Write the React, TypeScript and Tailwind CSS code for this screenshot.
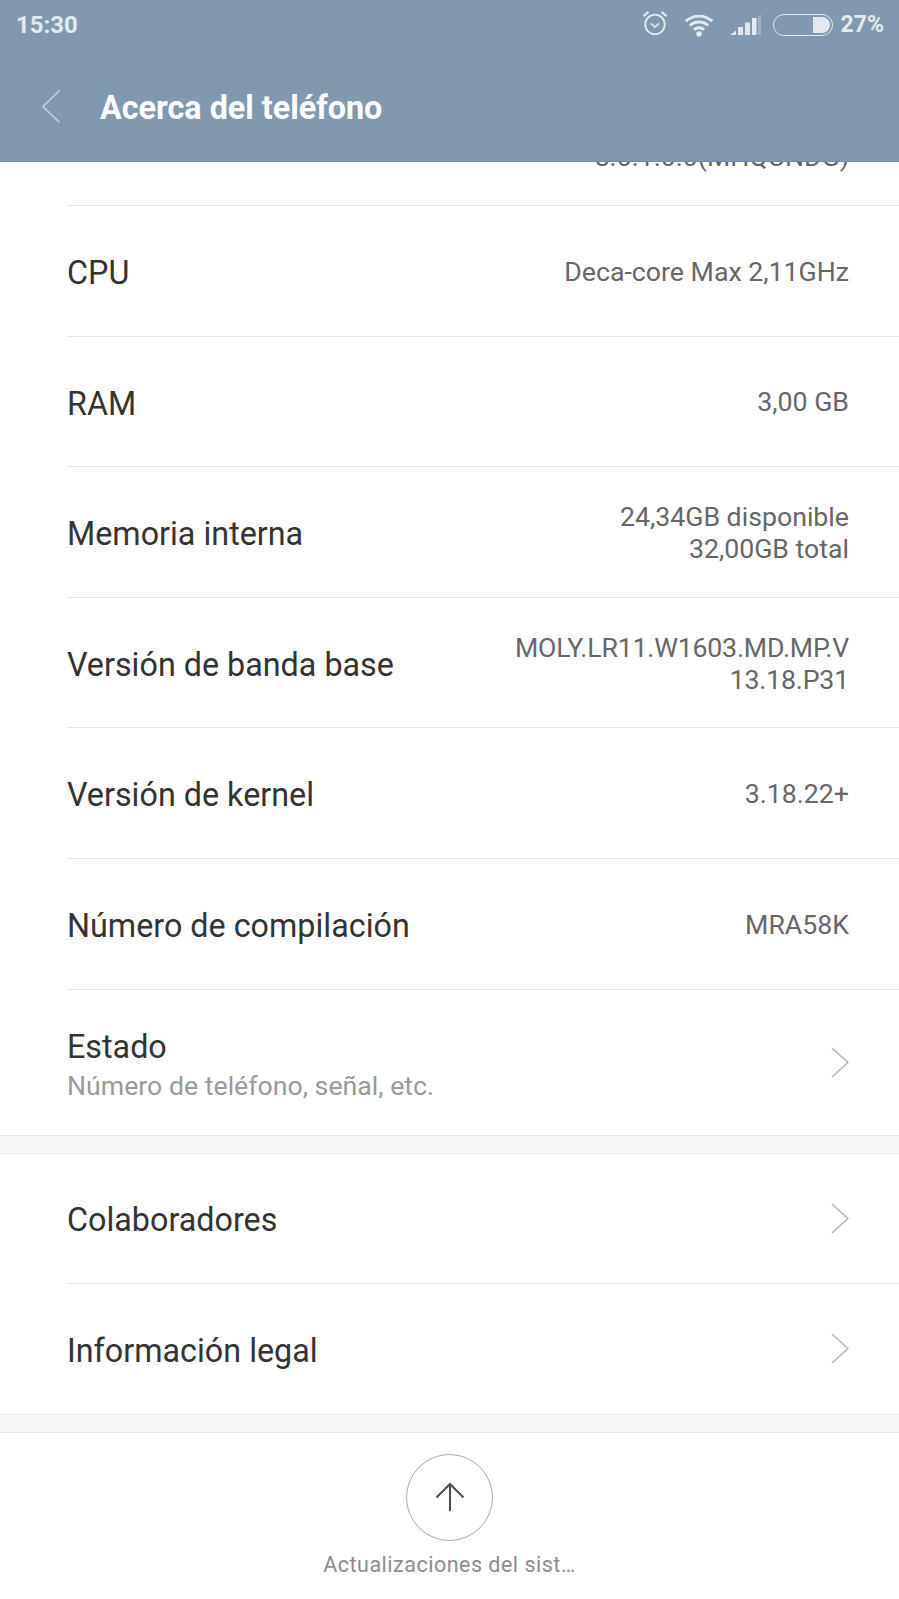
const rows = [
  { label: "CPU", value: ["Deca-core Max 2,11GHz"] },
  { label: "RAM", value: ["3,00 GB"] },
  { label: "Memoria interna", value: ["24,34GB disponible", "32,00GB total"] },
  { label: "Versión de banda base", value: ["MOLY.LR11.W1603.MD.MP.V", "13.18.P31"], tight: true },
  { label: "Versión de kernel", value: ["3.18.22+"] },
  { label: "Número de compilación", value: ["MRA58K"] },
];

function Chevron() {
  return (
    <svg width="18" height="31" viewBox="0 0 18 31" fill="none" className="shrink-0">
      <path d="M1 1 L17 15.5 L1 30" stroke="#b4b4b4" strokeWidth="1.5" />
    </svg>
  );
}

function StatusIcons() {
  return (
    <div className="flex items-center">
      {/* alarm */}
      <svg width="26" height="26" viewBox="0 0 28 28" fill="none" stroke="#e3e9ef" strokeWidth="2" className="mb-[5px] mr-[15px]">
        <circle cx="14" cy="15.5" r="10.5" />
        <path d="M9.5 14.5 L14 18.5 L18.5 14.5" strokeWidth="1.8" />
        <path d="M1.5 6.5 L7 2 M26.5 6.5 L21 2" strokeWidth="2.4" />
      </svg>
      {/* wifi */}
      <svg width="32" height="24" viewBox="0 0 32 26" fill="none" stroke="#e3e9ef" strokeWidth="3" className="mr-[15px]">
        <path d="M1.5 9 C9.5 1.5 22.5 1.5 30.5 9" />
        <path d="M6 13.5 C11.5 8.5 20.5 8.5 26 13.5" />
        <path d="M10.5 18 C13.5 15.3 18.5 15.3 21.5 18" />
        <circle cx="16" cy="22.8" r="3" fill="#e3e9ef" stroke="none" />
      </svg>
      {/* signal */}
      <svg width="31" height="22" viewBox="0 0 31 22" className="mr-[12px]">
        <path d="M0 21 L6 16.5 V21 Z" fill="#e3e9ef" />
        <rect x="8" y="13" width="5" height="8" fill="#e3e9ef" />
        <rect x="15" y="8.5" width="5" height="12.5" fill="#e3e9ef" />
        <rect x="22" y="4" width="4.5" height="17" fill="#e3e9ef" />
        <path d="M28 2 L31 0 V21 H28 Z" fill="#9fb0c0" />
      </svg>
      {/* battery */}
      <div className="mr-[8px] flex h-[22px] w-[60px] items-center justify-end rounded-full border-[1.5px] border-[#e3e9ef] pr-[2px]">
        <div className="h-[16px] w-[17px] rounded-r-full bg-[#e3e9ef]" />
      </div>
    </div>
  );
}

export default function App() {
  return (
    <div className="flex h-[1599px] w-[899px] flex-col overflow-hidden bg-white font-['Roboto',sans-serif]">
      <header className="h-[162px] shrink-0 border-b border-[#76899e] bg-[#8298ae]">
        <div className="flex h-[50px] items-center justify-between pl-[16px] pr-[15px] font-bold text-[#e3e9ef]">
          <span className="text-[24px]">15:30</span>
          <div className="flex items-center">
            <StatusIcons />
            <span className="text-[23px]">27%</span>
          </div>
        </div>
        <div className="mt-[29px] flex h-[58px] items-center pl-[42px]">
          <svg width="18" height="33" viewBox="0 0 18 33" fill="none" className="mb-[3px] mr-[40px]">
            <path d="M17.5 0.5 L1 16.5 L17.5 32.5" stroke="#c3ced9" strokeWidth="1.6" />
          </svg>
          <span className="text-[32.3px] font-bold text-white">Acerca del teléfono</span>
        </div>
      </header>

      {/* row scrolled under the header, only its bottom edge shows */}
      <div className="ml-[67px] flex h-[44px] shrink-0 items-start justify-end overflow-hidden border-b border-[#e4e4e4] pr-[50px]">
        <span className="mt-[-20px] text-[26.7px] leading-[30px] text-[#666666]">8.0.1.0.0(MHQCNDG)</span>
      </div>

      {rows.map((r) => (
        <div key={r.label} className="ml-[67px] flex h-[130.6px] shrink-0 items-center justify-between border-b border-[#e4e4e4] pr-[50px]">
          <span className="mt-[5px] text-[32.3px] text-[#333333]">{r.label}</span>
          <div className={r.tight ? "mt-[2px] text-right text-[26.7px] leading-[32px] tracking-[-0.18px] text-[#666666]" : "mt-[2px] text-right text-[26.7px] leading-[32px] text-[#666666]"}>
            {r.value.map((v) => (
              <div key={v}>{v}</div>
            ))}
          </div>
        </div>
      ))}

      <div className="flex h-[145px] shrink-0 items-center justify-between pl-[67px] pr-[50px]">
        <div className="mt-[7px] flex flex-col">
          <span className="text-[32.3px] leading-[40px] text-[#333333]">Estado</span>
          <span className="text-[26.7px] leading-[38px] text-[#999999]">Número de teléfono, señal, etc.</span>
        </div>
        <Chevron />
      </div>

      <div className="h-[19px] shrink-0 border-y border-[#e8e8e8] bg-[#f7f7f7]" />

      <div className="ml-[67px] flex h-[130px] shrink-0 items-center justify-between border-b border-[#e4e4e4] pr-[50px]">
        <span className="mt-[4px] text-[32.3px] text-[#333333]">Colaboradores</span>
        <Chevron />
      </div>
      <div className="ml-[67px] flex h-[130px] shrink-0 items-center justify-between pr-[50px]">
        <span className="mt-[6px] text-[32.3px] text-[#333333]">Información legal</span>
        <Chevron />
      </div>

      <div className="h-[19px] shrink-0 border-y border-[#e8e8e8] bg-[#f7f7f7]" />

      <div className="flex flex-1 flex-col items-center pt-[21px]">
        <div className="flex h-[87px] w-[87px] items-center justify-center rounded-full border border-[#a8a8a8]">
          <svg width="30" height="30" viewBox="0 0 30 30" fill="none" stroke="#4a4a4a" strokeWidth="2">
            <path d="M15 29 V2 M1.5 15.5 L15 2 L28.5 15.5" />
          </svg>
        </div>
        <span className="mt-[8px] text-[21.5px] tracking-[0.5px] text-[#8c8c8c]">Actualizaciones del sist…</span>
      </div>
    </div>
  );
}
